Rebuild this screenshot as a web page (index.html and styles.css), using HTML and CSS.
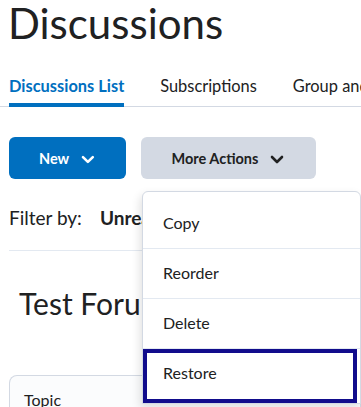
FILE: index.html
```html
<!DOCTYPE html>
<html lang="en">
<head>
<meta charset="utf-8">
<title>Discussions</title>
<link rel="stylesheet" href="styles.css">
</head>
<body>
<div class="page">
  <h1 class="title">Discussions</h1>
  <nav class="tabs">
    <a class="tab active">Discussions List</a>
    <a class="tab">Subscriptions</a>
    <a class="tab">Group and Section Restrictions</a>
  </nav>
  <div class="actions">
    <button class="btn primary">New
      <svg class="chev" viewBox="0 0 14 9" width="14" height="9"><path d="M2 2 L7 7 L12 2" fill="none" stroke="currentColor" stroke-width="2.6" stroke-linecap="round" stroke-linejoin="round"/></svg>
    </button>
    <div class="more-wrap">
      <button class="btn secondary">More Actions
        <svg class="chev" viewBox="0 0 14 9" width="14" height="9"><path d="M2 2 L7 7 L12 2" fill="none" stroke="currentColor" stroke-width="2.6" stroke-linecap="round" stroke-linejoin="round"/></svg>
      </button>
      <ul class="menu">
        <li class="item">Copy</li>
        <li class="item">Reorder</li>
        <li class="item">Delete</li>
        <li class="item focused">Restore</li>
      </ul>
    </div>
  </div>
  <div class="filter"><span class="label">Filter by:</span><span class="opt">Unread</span><span class="opt">Unapproved</span></div>
  <h2 class="forum">Test Forum</h2>
  <div class="table">
    <div class="thead">Topic</div>
  </div>
</div>
</body>
</html>
```
FILE: styles.css
```css
html, body {
  margin: 0;
  padding: 0;
  background: #ffffff;
  overflow: hidden;
}
body {
  font-family: Lato, "Noto Sans", "Liberation Sans", sans-serif;
  color: #202122;
  width: 361px;
  height: 407px;
}
.page {
  padding-left: 9px;
}
.title {
  margin: 0 0 0 -1px;
  font-size: 42px;
  font-weight: 400;
  line-height: 46px;
  color: #202122;
}
.tabs {
  margin-top: 30px;
  margin-left: -9px;
  padding-left: 9px;
  display: flex;
  white-space: nowrap;
  border-bottom: 1px solid #d3d9e3;
}
.tab {
  font-size: 16.4px;
  line-height: 20px;
  padding-bottom: 7px;
  margin-right: 36px;
  border-bottom: 4px solid transparent;
  margin-bottom: -1px;
  color: #202122;
}
.tab.active {
  color: #006fbf;
  font-weight: 700;
  border-bottom-color: #006fbf;
}
.actions {
  margin-top: 30px;
  display: flex;
  gap: 15px;
}
.btn {
  height: 42px;
  border: none;
  border-radius: 6px;
  font-family: inherit;
  font-size: 14.5px;
  font-weight: 700;
  display: flex;
  align-items: center;
  gap: 12px;
  padding: 0 31px 0 30px;
  cursor: pointer;
}
.primary {
  background: #006fbf;
  color: #ffffff;
  width: 117px;
  justify-content: center;
}
.secondary {
  background: #d3d9e3;
  color: #202122;
  width: 175px;
  justify-content: center;
}
.chev {
  display: block;
  margin-top: 2px;
}
.more-wrap {
  position: relative;
}
.menu {
  position: absolute;
  left: 1px;
  top: 54px;
  width: 217px;
  margin: 0;
  padding: 7px 0 0 0;
  list-style: none;
  background: #ffffff;
  border: 1px solid #d3d9e3;
  border-radius: 6px 6px 0 0;
  box-shadow: -2px 4px 10px rgba(0, 0, 0, 0.12);
  z-index: 10;
}
.item {
  font-size: 16px;
  line-height: 20px;
  padding: 14px 20px 15px 20px;
  border-bottom: 1px solid #e3e9f1;
  color: #202122;
}
.item.focused {
  border: 4px solid #110c8c;
  padding: 10px 16px 16px 16px;
  margin-right: 3px;
}
.filter {
  margin-top: 27px;
  padding-bottom: 20px;
  font-size: 19px;
  line-height: 24px;
  border-bottom: 1px solid #e3e9f1;
  white-space: nowrap;
  display: flex;
  gap: 18px;
}
.filter .opt {
  font-weight: 700;
}
.forum {
  margin: 34px 0 0 10px;
  font-size: 30px;
  font-weight: 400;
  line-height: 36px;
}
.table {
  margin-top: 54px;
  border: 1px solid #d3d9e3;
  border-radius: 8px 8px 0 0;
  border-bottom: none;
  height: 60px;
  background: #fbfcfd;
}
.thead {
  padding: 14px 15px 0 14px;
  font-size: 16px;
  line-height: 20px;
}
```
